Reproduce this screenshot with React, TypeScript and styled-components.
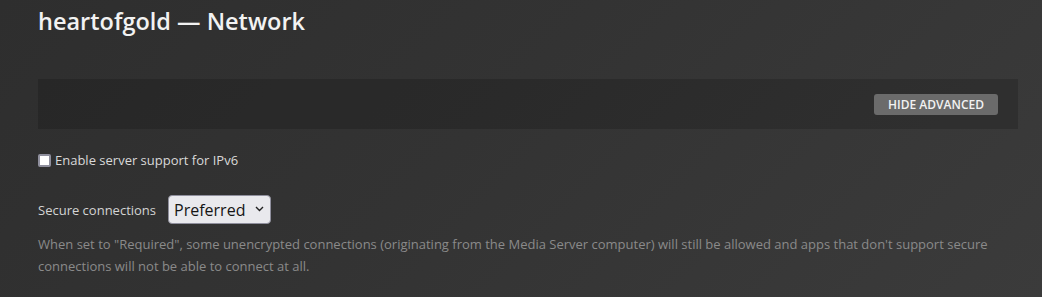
import styled, { createGlobalStyle } from "styled-components";

const GlobalStyle = createGlobalStyle`
  html, body {
    margin: 0;
    padding: 0;
  }
  body {
    width: 1042px;
    height: 297px;
    overflow: hidden;
    font-family: "Open Sans", "Noto Sans", sans-serif;
    background: linear-gradient(135deg, #2e2e2e 0%, #333333 45%, #3b3b3b 100%);
  }
`;

const Page = styled.div`
  padding: 0 24px 0 38px;
  height: 297px;
  box-sizing: border-box;
`;

const Title = styled.h1`
  margin: 0;
  padding-top: 5px;
  font-size: 23.5px;
  font-weight: 600;
  line-height: 32px;
  color: #f2f2f2;
`;

const AdvancedBar = styled.div`
  margin-top: 42px;
  height: 50px;
  background: rgba(0, 0, 0, 0.16);
  display: flex;
  align-items: center;
  justify-content: flex-end;
  padding: 0 20px;
`;

const BarButton = styled.button`
  height: 21px;
  padding: 0 14px;
  border: none;
  border-radius: 3px;
  background: #6b6b6b;
  color: #f2f2f2;
  font-family: inherit;
  font-size: 12px;
  font-weight: 600;
  text-transform: uppercase;
  cursor: pointer;
`;

const CheckRow = styled.label`
  display: flex;
  align-items: center;
  gap: 4px;
  margin-top: 22px;
  font-size: 13px;
  color: #d9d9d9;
  line-height: 18px;
`;

const Check = styled.input`
  appearance: none;
  margin: 0;
  width: 13px;
  height: 13px;
  box-sizing: border-box;
  border: 2px solid #8f8f9d;
  border-radius: 2px;
  background: #ffffff;
`;

const FieldRow = styled.div`
  display: flex;
  align-items: center;
  gap: 12px;
  margin-top: 26px;
`;

const FieldLabel = styled.label`
  font-size: 13px;
  color: #d4d4d4;
`;

const SelectWrap = styled.div`
  position: relative;
  display: inline-flex;
`;

const Select = styled.select`
  appearance: none;
  height: 29px;
  padding: 0 24px 0 5px;
  border: 1px solid #8f8f9d;
  border-radius: 4px;
  background: #e9e9ed;
  color: #151515;
  font-family: inherit;
  font-size: 16px;
`;

const Chevron = styled.svg`
  position: absolute;
  right: 7px;
  top: 11px;
  pointer-events: none;
`;

const Help = styled.p`
  margin: 9px 0 0;
  font-size: 13px;
  line-height: 22px;
  color: #8a8a8a;
  max-width: 980px;
`;

export default function App() {
  return (
    <>
      <GlobalStyle />
      <Page>
        <Title>heartofgold — Network</Title>
        <AdvancedBar>
          <BarButton>Hide Advanced</BarButton>
        </AdvancedBar>
        <CheckRow>
          <Check type="checkbox" />
          Enable server support for IPv6
        </CheckRow>
        <FieldRow>
          <FieldLabel>Secure connections</FieldLabel>
          <SelectWrap>
            <Select defaultValue="preferred">
              <option value="required">Required</option>
              <option value="preferred">Preferred</option>
              <option value="disabled">Disabled</option>
            </Select>
            <Chevron width="9" height="6" viewBox="0 0 9 6">
              <path d="M1 1l3.5 3.5L8 1" fill="none" stroke="#222" strokeWidth="1.4" />
            </Chevron>
          </SelectWrap>
        </FieldRow>
        <Help>
          When set to "Required", some unencrypted connections (originating from the Media Server computer) will
          still be allowed and apps that don't support secure connections will not be able to connect at all.
        </Help>
      </Page>
    </>
  );
}
